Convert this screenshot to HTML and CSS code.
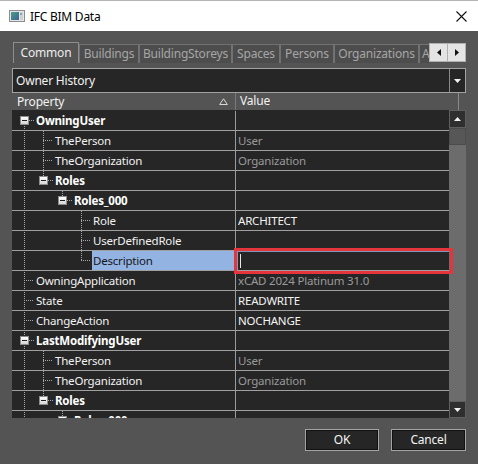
FILE: index.html
```html
<!DOCTYPE html>
<html>
<head>
<meta charset="utf-8">
<link rel="stylesheet" href="styles.css">
</head>
<body>
<div class="window">
  <div class="titlebar">
    <svg class="app-icon" width="16" height="12" viewBox="0 0 16 12">
      <defs>
        <linearGradient id="ig" x1="0" y1="0" x2="1" y2="1">
          <stop offset="0" stop-color="#4f9d86"/>
          <stop offset="0.6" stop-color="#3f7b8e"/>
          <stop offset="1" stop-color="#4b5f9a"/>
        </linearGradient>
      </defs>
      <rect x="0.5" y="0.5" width="15" height="11" fill="#e6e6e6" stroke="#8c8c8c"/>
      <rect x="2" y="2" width="8" height="8" fill="url(#ig)"/>
      <rect x="11" y="2" width="3" height="8" fill="#c9d3d6"/>
      <rect x="11" y="3" width="2" height="2" fill="#7fa9b5"/>
    </svg>
    <span class="title">IFC BIM Data</span>
    <svg class="close" width="11" height="11" viewBox="0 0 11 11">
      <path d="M0.5 0.5 L10.5 10.5 M10.5 0.5 L0.5 10.5" stroke="#111" stroke-width="1.1" fill="none"/>
    </svg>
  </div>

  <div class="content">
    <div class="tabbar">
      <div class="tabs">
        <div class="tab active t-common">Common</div>
        <div class="tab t-buildings">Buildings</div>
        <div class="tab t-storeys">BuildingStoreys</div>
        <div class="tab t-spaces">Spaces</div>
        <div class="tab t-persons">Persons</div>
        <div class="tab t-orgs">Organizations</div>
        <div class="tab t-more">Addresses</div>
      </div>
      <div class="tab-scroll">
        <div class="arrow-btn">
          <svg width="4" height="7" viewBox="0 0 4 7"><path d="M4 0 L0 3.5 L4 7 Z" fill="#111"/></svg>
        </div>
        <div class="arrow-btn">
          <svg width="4" height="7" viewBox="0 0 4 7"><path d="M0 0 L4 3.5 L0 7 Z" fill="#111"/></svg>
        </div>
      </div>
    </div>

    <div class="combo">
      <span class="combo-text">Owner History</span>
      <span class="combo-btn">
        <svg width="7" height="4" viewBox="0 0 7 4"><path d="M0 0 H7 L3.5 4 Z" fill="#f2f2f2"/></svg>
      </span>
    </div>

    <div class="header">
      <div class="h-prop">
        <span>Property</span>
        <svg class="sort" width="9" height="7" viewBox="0 0 9 7"><path d="M4.5 0.8 L8.3 6.5 H0.7 Z" fill="none" stroke="#d8d8d8" stroke-width="1"/></svg>
      </div>
      <div class="h-val">Value</div>
    </div>

    <div class="grid">
      <div class="list">
        <svg class="tree-lines" width="224" height="308" viewBox="0 0 224 308">
          <path d="M12.5 10 V308
                   M17 10.5 H22 M12 170.5 H22 M12 190.5 H22 M12 210.5 H22 M17 230.5 H22
                   M31.5 21 V70 M31 30.5 H41 M31 50.5 H41 M36 70.5 H41
                   M50.5 81 V90 M55 90.5 H60
                   M69.5 101 V150 M69 110.5 H79 M69 130.5 H79 M69 150.5 H79
                   M31.5 241 V290 M31 250.5 H41 M31 270.5 H41 M36 290.5 H41
                   M50.5 301 V308"
                fill="none" stroke="#a8a8a8" stroke-width="1" stroke-dasharray="1 1"/>
        </svg>
        <div class="rows">
          <div class="row"><div class="pcell l0"><span class="exp"></span><span class="label bold">OwningUser</span></div><div class="vcell"></div></div>
          <div class="row"><div class="pcell l1"><span class="leaf"></span><span class="label">ThePerson</span></div><div class="vcell muted">User</div></div>
          <div class="row"><div class="pcell l1"><span class="leaf"></span><span class="label">TheOrganization</span></div><div class="vcell muted">Organization</div></div>
          <div class="row"><div class="pcell l1"><span class="exp"></span><span class="label bold">Roles</span></div><div class="vcell"></div></div>
          <div class="row"><div class="pcell l2"><span class="exp"></span><span class="label bold">Roles_000</span></div><div class="vcell"></div></div>
          <div class="row"><div class="pcell l3"><span class="leaf"></span><span class="label">Role</span></div><div class="vcell">ARCHITECT</div></div>
          <div class="row"><div class="pcell l3"><span class="leaf"></span><span class="label">UserDefinedRole</span></div><div class="vcell"></div></div>
          <div class="row"><div class="pcell l3"><span class="leaf"></span><span class="label selected">Description</span></div><div class="vcell"><div class="edit"></div></div></div>
          <div class="row"><div class="pcell l0"><span class="leaf"></span><span class="label">OwningApplication</span></div><div class="vcell muted">xCAD 2024 Platinum 31.0</div></div>
          <div class="row"><div class="pcell l0"><span class="leaf"></span><span class="label">State</span></div><div class="vcell">READWRITE</div></div>
          <div class="row"><div class="pcell l0"><span class="leaf"></span><span class="label">ChangeAction</span></div><div class="vcell">NOCHANGE</div></div>
          <div class="row"><div class="pcell l0"><span class="exp"></span><span class="label bold">LastModifyingUser</span></div><div class="vcell"></div></div>
          <div class="row"><div class="pcell l1"><span class="leaf"></span><span class="label">ThePerson</span></div><div class="vcell muted">User</div></div>
          <div class="row"><div class="pcell l1"><span class="leaf"></span><span class="label">TheOrganization</span></div><div class="vcell muted">Organization</div></div>
          <div class="row"><div class="pcell l1"><span class="exp"></span><span class="label bold">Roles</span></div><div class="vcell"></div></div>
          <div class="row"><div class="pcell l2"><span class="exp"></span><span class="label bold">Roles_000</span></div><div class="vcell"></div></div>
        </div>
      </div>
      <div class="vscroll">
        <div class="sb-btn"><svg width="7" height="4" viewBox="0 0 7 4"><path d="M3.5 0 L7 4 H0 Z" fill="#f2f2f2"/></svg></div>
        <div class="sb-thumb"></div>
        <div class="sb-track"></div>
        <div class="sb-btn"><svg width="7" height="4" viewBox="0 0 7 4"><path d="M0 0 H7 L3.5 4 Z" fill="#f2f2f2"/></svg></div>
      </div>
      <div class="annotation"></div>
    </div>

    <div class="buttons">
      <div class="btn">OK</div>
      <div class="btn">Cancel</div>
    </div>
  </div>
</div>
</body>
</html>
```

FILE: styles.css
```css
* { box-sizing: border-box; }

html, body {
  margin: 0;
  padding: 0;
}

body {
  width: 478px;
  height: 464px;
  overflow: hidden;
  background: #545454;
  font-family: "Segoe UI", "Noto Sans", sans-serif;
  font-size: 11.5px;
  letter-spacing: -0.2px;
  color: #f2f2f2;
}

.window {
  width: 478px;
  height: 464px;
  display: flex;
  flex-direction: column;
}

/* Title bar */
.titlebar {
  height: 31px;
  flex: none;
  background: #ffffff;
  border-top: 1px solid #b4b4b4;
  display: flex;
  align-items: center;
  padding-left: 9px;
  padding-right: 11px;
}

.app-icon { flex: none; margin-top: 0; }

.title {
  margin-left: 5px;
  color: #000;
  font-size: 12px;
  letter-spacing: -0.25px;
  flex: 1;
}

.close { flex: none; }

/* Content */
.content {
  flex: 1;
  padding: 11px 12px 0 12px;
  display: flex;
  flex-direction: column;
}

/* Tabs */
.tabbar {
  height: 21px;
  display: flex;
  margin-left: 1px;
  flex: none;
}

.tabs {
  flex: 1;
  display: flex;
  align-items: flex-end;
  overflow: hidden;
  white-space: nowrap;
}

.tab {
  flex: none;
  height: 19px;
  line-height: 17px;
  text-align: center;
  border: 1px solid #727272;
  border-bottom: none;
  background: #4d4d4d;
  color: #a6a6a6;
  font-size: 12px;
}

.tab.active {
  height: 21px;
  line-height: 19px;
  background: #545454;
  border-color: #8e8e8e;
  color: #ececec;
}

.t-common { width: 66px; }
.t-buildings { width: 60px; }
.t-storeys { width: 93px; }
.t-spaces { width: 48px; }
.t-persons { width: 54px; }
.t-orgs { width: 85px; }
.t-more { width: 70px; text-align: left; padding-left: 2px; }

.tab-scroll {
  flex: none;
  display: flex;
  margin-top: 1px;
  height: 19px;
}

.arrow-btn {
  width: 19px;
  height: 19px;
  background: #e4e4e4;
  border: 1px solid #b0b0b0;
  display: flex;
  align-items: center;
  justify-content: center;
}

.arrow-btn + .arrow-btn { width: 18px; border-left: none; }

/* Combo */
.combo {
  margin-top: 5px;
  height: 25px;
  flex: none;
  display: flex;
  border: 1px solid #a2a2a2;
  background: #262626;
}

.combo-text {
  flex: 1;
  padding-left: 3px;
  line-height: 23px;
  font-size: 12px;
  color: #f2f2f2;
}

.combo-btn {
  width: 16px;
  border-left: 1px solid #8a8a8a;
  display: flex;
  align-items: center;
  justify-content: center;
  background: #262626;
}

/* Header */
.header {
  height: 17px;
  flex: none;
  display: flex;
  width: 447px;
}

.h-prop {
  width: 224px;
  display: flex;
  align-items: center;
  padding-left: 5px;
  padding-right: 7px;
  border-right: 1px solid #7a7a7a;
  font-size: 12px;
}

.h-prop span { flex: 1; }

.h-val {
  flex: 1;
  padding-left: 4px;
  line-height: 16px;
  font-size: 12px;
  border-right: 1px solid #8a8a8a;
}

/* Grid */
.grid {
  height: 308px;
  flex: none;
  display: flex;
  position: relative;
}

.list {
  width: 437px;
  height: 308px;
  background: #262626;
  position: relative;
  overflow: hidden;
  padding-top: 1px;
}

.tree-lines {
  position: absolute;
  left: 0;
  top: 0;
  z-index: 0;
}

.rows {
  position: relative;
  z-index: 1;
}

.row {
  height: 20px;
  display: flex;
  border-bottom: 1px solid #a0a0a0;
}

.pcell {
  width: 224px;
  flex: none;
  display: flex;
  border-right: 1px solid #9a9a9a;
}

.l0 { padding-left: 8px; }
.l1 { padding-left: 27px; }
.l2 { padding-left: 46px; }
.l3 { padding-left: 65px; }

.exp, .leaf {
  flex: none;
  width: 9px;
  height: 9px;
  margin-top: 5px;
  margin-right: 7px;
}

.exp {
  position: relative;
  border: 1px solid #8d8d8d;
  background: linear-gradient(#ffffff, #d6d6d6);
}

.exp::after {
  content: "";
  position: absolute;
  left: 1px;
  top: 3px;
  width: 5px;
  height: 1px;
  background: #1e1e1e;
}

.label {
  flex: 1;
  display: flex;
  align-items: center;
  color: #f2f2f2;
  white-space: nowrap;
}

.label.bold {
  font-weight: bold;
  color: #ffffff;
}

.label.selected {
  margin-left: -1px;
  padding-left: 1px;
  background: #93b3e2;
  color: #161616;
}

.vcell {
  flex: 1;
  display: flex;
  align-items: center;
  padding-left: 2px;
  color: #f4f4f4;
  white-space: nowrap;
}

.vcell.muted { color: #9a9a9a; }

.edit {
  position: relative;
  align-self: stretch;
  flex: 1;
  margin-left: -1px;
  border-top: 1px solid #7f98b8;
  border-left: 1px solid #7f98b8;
  background: #262626;
}

.edit::before {
  content: "";
  position: absolute;
  left: 2px;
  top: 2px;
  bottom: 2px;
  width: 1px;
  background: #e8e8e8;
}

/* Scrollbar */
.vscroll {
  width: 17px;
  height: 308px;
  flex: none;
  display: flex;
  flex-direction: column;
  background: #6c6c6c;
}

.sb-btn {
  height: 18px;
  flex: none;
  background: #2f2f2f;
  border: 1px solid #5f5f5f;
  display: flex;
  align-items: center;
  justify-content: center;
}

.sb-btn:last-child { height: 17px; }

.sb-thumb {
  height: 17px;
  flex: none;
  background: #575757;
  border: 1px solid #4c4c4c;
}

.sb-track { flex: 1; }

/* Red annotation frame over the edited cell */
.annotation {
  position: absolute;
  left: 222px;
  top: 138px;
  width: 219px;
  height: 26px;
  border: 3px solid #e5343b;
  z-index: 3;
}

/* Buttons */
.buttons {
  margin-top: 11px;
  display: flex;
  justify-content: flex-end;
  gap: 12px;
}

.btn {
  width: 75px;
  height: 22px;
  background: #262626;
  border: 1px solid #a4a4a4;
  box-shadow: inset 0 0 0 1px #121212;
  color: #f4f4f4;
  font-size: 12px;
  text-align: center;
  line-height: 20px;
}

.btn:first-child { width: 74px; }
```
